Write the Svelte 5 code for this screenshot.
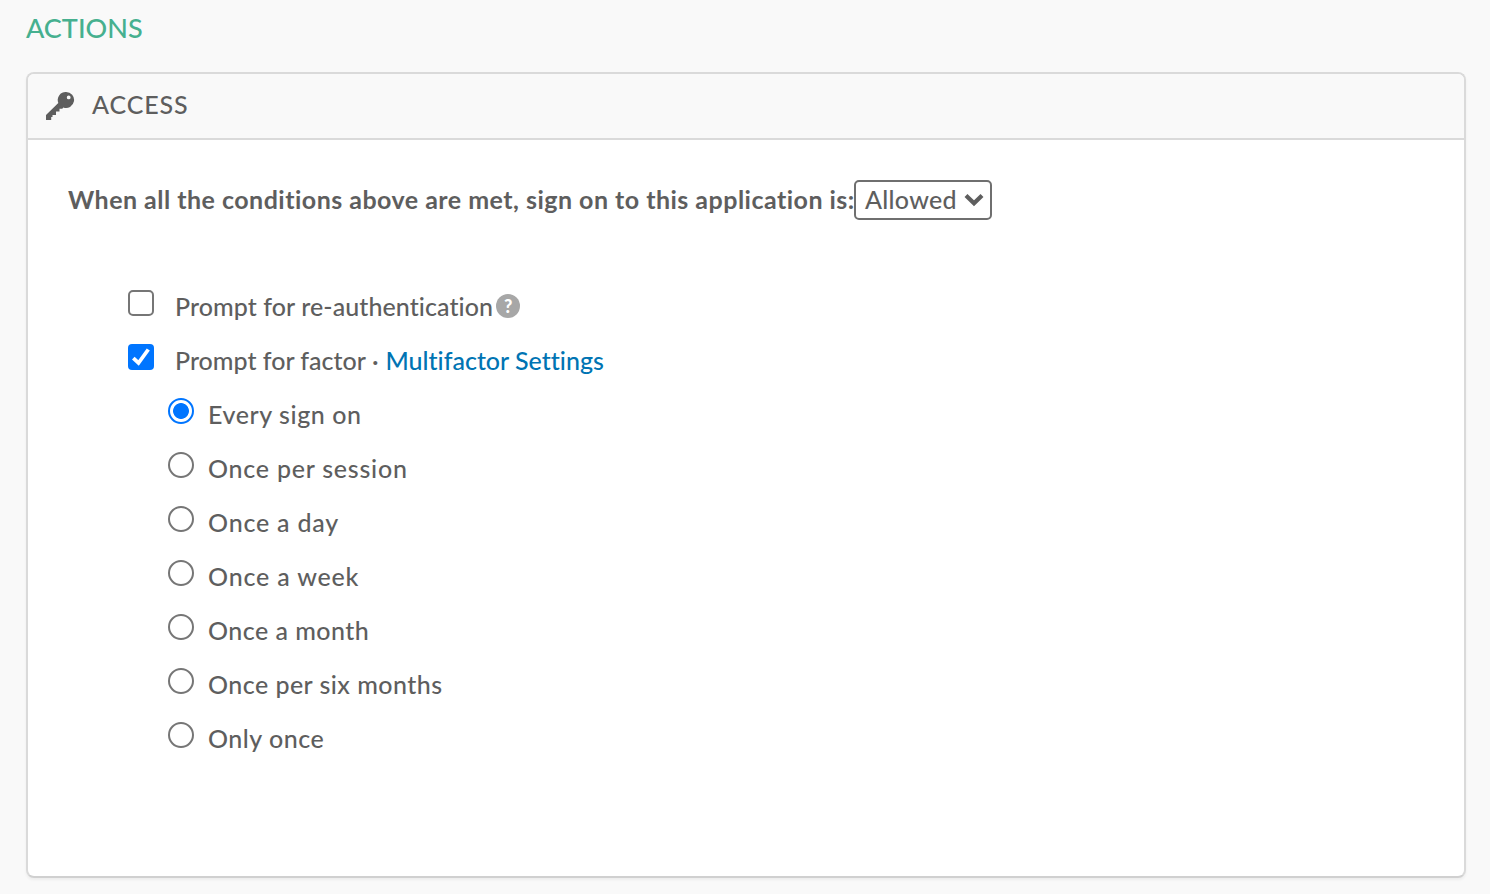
<script>
  const frequencies = [
    { label: 'Every sign on', spacing: 0.58 },
    { label: 'Once per session', spacing: 0.76 },
    { label: 'Once a day', spacing: 0.8 },
    { label: 'Once a week', spacing: 0.82 },
    { label: 'Once a month', spacing: 0.47 },
    { label: 'Once per six months', spacing: 0.46 },
    { label: 'Only once', spacing: 0.5 }
  ];
  let selected = $state('Every sign on');
</script>

<main>
  <h2>ACTIONS</h2>
  <section class="card">
    <header>
      <svg class="key" width="30" height="30" viewBox="0 0 30 30">
        <path fill="#5e5e5e" fill-rule="evenodd" d="M21 1a8 8 0 1 1-2.700 15.500l-1 1.200h-2.800v2.800h-3.500v3.500H7.500v2H6.200v3H1v-5L13.300 12A8 8 0 0 1 21 1Zm2.700 3.500a1.900 1.900 0 1 0 0 3.800a1.900 1.900 0 0 0 0-3.800Z" />
      </svg>
      <span class="title">ACCESS</span>
    </header>
    <div class="body">
      <div class="rule">
        <strong>When all the conditions above are met, sign on to this application is:</strong>
        <button class="select"><span>Allowed</span>
          <svg width="20" height="14" viewBox="0 0 20 14"><path d="M2 2.500L10 10.300L18 2.500" fill="none" stroke="#5e5e5e" stroke-width="4.200" /></svg>
        </button>
      </div>
      <div class="row">
        <span class="check"></span><span class="reauth">Prompt for re-authentication</span><span class="help">?</span>
      </div>
      <div class="row">
        <span class="check on"><svg width="26" height="26" viewBox="0 0 26 26"><path d="M5.300 14.200L10.500 19L20.300 5.500" fill="none" stroke="#fff" stroke-width="3.800" /></svg></span>
        <span class="factor">Prompt for factor</span><span class="dot">·</span><a href="#settings">Multifactor Settings</a>
      </div>
      {#each frequencies as f}
        <label class="row sub">
          <input type="radio" name="frequency" value={f.label} bind:group={selected} />
          <span style="letter-spacing: {f.spacing}px">{f.label}</span>
        </label>
      {/each}
    </div>
  </section>
</main>

<style>
  :global(body) { background: #f9f9f9; }
  main {
    box-sizing: border-box; height: 894px; padding: 8px 24px 16px 26px; overflow: hidden;
    display: flex; flex-direction: column; background: #f9f9f9;
    font: 500 25px/40px Lato, sans-serif; color: #5e5e5e;
    font-variant-ligatures: none;
  }
  h2 { margin: 0 0 24px; font: 500 27px/40px Lato, sans-serif; color: #46b08f; font-variant-ligatures: none; }
  .card { flex: 1; box-sizing: border-box; border: 2px solid #dadada; border-bottom-color: #d0d0d0; border-radius: 8px; background: #fff; box-shadow: 0 2px 3px rgba(0,0,0,.05); overflow: hidden; }
  header { height: 64px; display: flex; align-items: center; border-bottom: 2px solid #dadada; background: #f9f9f9; padding-left: 17px; gap: 17px; }
  .title { letter-spacing: 0.9px; margin-bottom: 4px; }
  .body { padding: 40px; }
  .rule { display: flex; height: 40px; margin-bottom: 60px; line-height: 38px; }
  strong { font-weight: 700; letter-spacing: 0.48px; width: 786px; white-space: nowrap; }
  .select { box-sizing: border-box; width: 138px; height: 40px; border: 2px solid #6f6f6f; border-radius: 5px; background: #fff; display: flex; align-items: center; padding: 0 6px 0 9px; justify-content: space-between; font: inherit; letter-spacing: 0.3px; color: inherit; }
  .select span { margin-bottom: 2px; }
  .row { display: flex; height: 54px; margin-left: 60px; align-items: center; line-height: 38px; }
  .row > span:not(.check, .help), .row > a { padding-bottom: 2px; }
  .reauth { letter-spacing: 0.08px; }
  .check { box-sizing: border-box; width: 26px; height: 26px; border: 2px solid #767676; border-radius: 5px; margin-right: 21px; background: #fff; position: relative; top: -4px; }
  .on { border: 0; background: #0075ff; border-radius: 4px; }
  .on svg { display: block; }
  .help { width: 24px; height: 24px; border-radius: 50%; background: #a7a7a7; color: #fff; font: 900 18px/24px Lato, sans-serif; text-align: center; margin: 0 0 2px 3px; }
  .dot { margin: 0 7px 0 6px; }
  a { color: #0074b3; text-decoration: none; }
  .sub { margin-left: 100px; }
  input { appearance: none; box-sizing: border-box; width: 26px; height: 26px; margin: 0 14px 0 0; border: 2px solid #767676; border-radius: 50%; position: relative; top: -4px; }
  input:checked { border-color: #0075ff; background: radial-gradient(circle, #0075ff 7.500px, #fff 8.300px); }
</style>
